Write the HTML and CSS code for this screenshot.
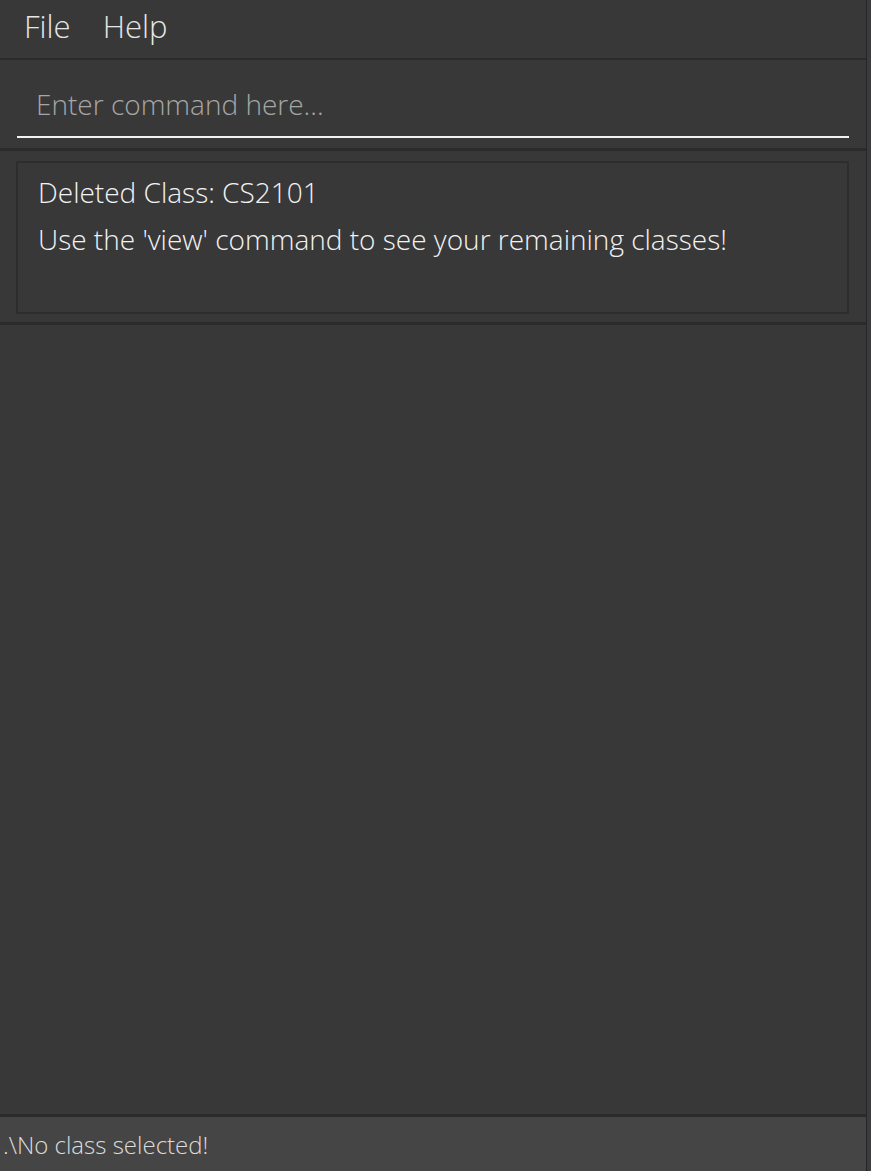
FILE: index.html
```html
<!DOCTYPE html>
<html>
<head>
<meta charset="utf-8">
<link rel="stylesheet" href="styles.css">
</head>
<body>
<div class="window">
  <div class="menubar">
    <span class="menu-item">File</span>
    <span class="menu-item">Help</span>
  </div>
  <div class="command">
    <div class="command-field">
      <span class="placeholder">Enter command here...</span>
    </div>
  </div>
  <div class="result">
    <div class="result-box">
      <div class="result-line">Deleted Class: CS2101</div>
      <div class="result-line">Use the 'view' command to see your remaining classes!</div>
    </div>
  </div>
  <div class="list"></div>
  <div class="status">.\No class selected!</div>
</div>
<div class="desktop"></div>
</body>
</html>
```
FILE: styles.css
```css
html, body {
  margin: 0;
  padding: 0;
  height: 100%;
}
body {
  display: flex;
  background: #3a3b3e;
  font-family: "Open Sans", "Noto Sans", sans-serif;
  font-weight: 300;
  overflow: hidden;
}
.window {
  width: 866px;
  height: 1171px;
  display: flex;
  flex-direction: column;
  background: #383838;
  border-right: 1px solid #262626;
}
.desktop {
  flex: 1;
}
.menubar {
  height: 58px;
  display: flex;
  align-items: center;
  gap: 32px;
  padding-left: 24px;
  border-bottom: 2px solid #2b2b2b;
  box-sizing: content-box;
}
.menu-item {
  color: #e6e6e6;
  font-size: 31px;
  line-height: 1;
  padding-bottom: 6px;
}
.command {
  height: 88px;
  padding: 0 17px;
  display: flex;
  align-items: flex-start;
  border-bottom: 3px solid #2b2b2b;
}
.command-field {
  flex: 1;
  height: 78px;
  border-bottom: 2px solid #f2f2f2;
  display: flex;
  align-items: center;
  padding-left: 19px;
  padding-top: 12px;
  box-sizing: border-box;
}
.placeholder {
  color: #a6a6a6;
  font-size: 28px;
}
.result {
  height: 174px;
  padding: 10px 17px 8px 16px;
  box-sizing: border-box;
  border-bottom: 3px solid #2b2b2b;
  display: flex;
}
.result-box {
  flex: 1;
  border: 2px solid #2d2d2d;
  padding: 6px 0 0 20px;
}
.result-line {
  color: #f2f2f2;
  font-size: 28px;
  line-height: 47px;
}
.list {
  flex: 1;
  border-bottom: 3px solid #2b2b2b;
}
.status {
  height: 54px;
  background: #454545;
  color: #dcdcdc;
  font-size: 24px;
  display: flex;
  align-items: center;
  padding-left: 3px;
}
```
